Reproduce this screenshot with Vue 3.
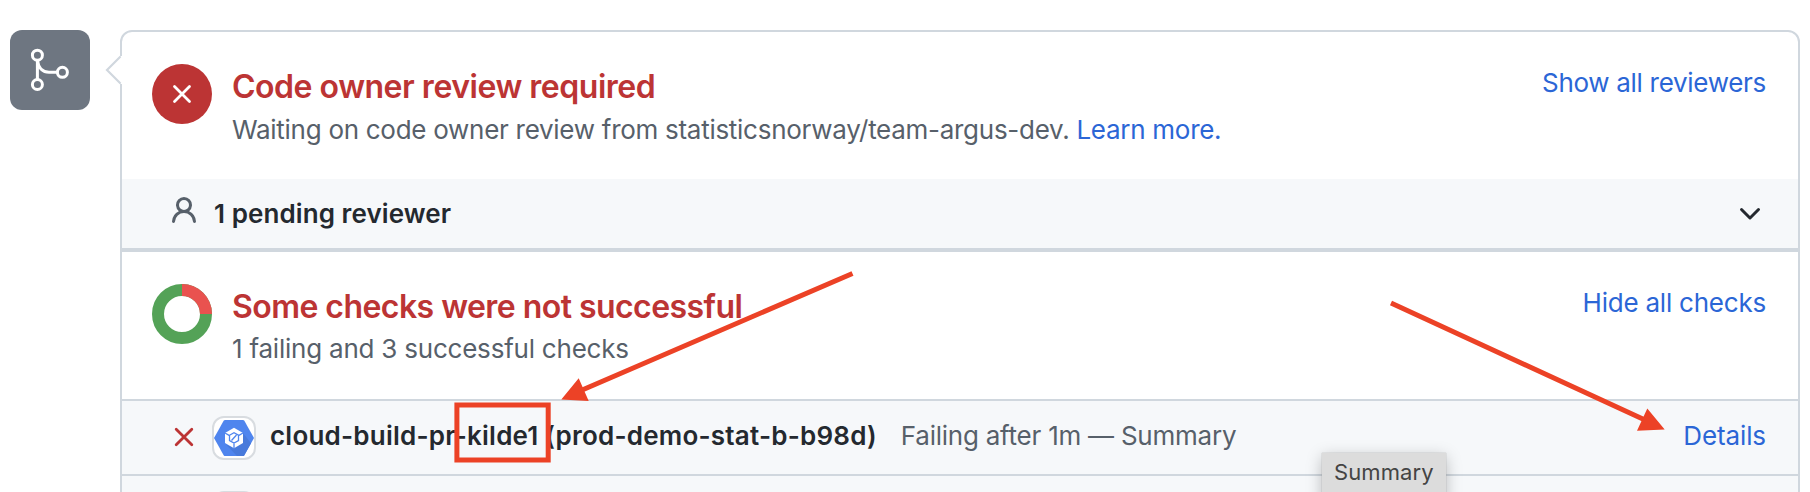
<script setup>
const failing = {
  name: 'cloud-build-pr-kilde1 (prod-demo-stat-b-b98d)',
  status: 'Failing after 1m — Summary',
}
</script>

<template>
  <main class="page">
    <div class="badge">
      <svg class="merge" width="48" height="48" viewBox="0 0 48 48" fill="none" stroke="#fff" stroke-width="3">
        <circle cx="11.4" cy="9.2" r="5" />
        <circle cx="11.4" cy="38.500" r="5" />
        <circle cx="36.4" cy="26.300" r="5" />
        <path d="M11.400 14v20M11.600 15c.8 6.800 5 11.300 11.400 11.300h8.500" />
      </svg>
    </div>

    <section class="panel">
      <svg class="caret" width="18" height="30" viewBox="0 0 18 30">
        <path d="M18 1L16 1 2 15l14 14h2z" fill="#fff" />
        <path d="M15.500 1.500L2 15l13.500 13.500" fill="none" stroke="#d0d7de" stroke-width="2.200" />
      </svg>

      <div class="summary">
        <div class="circle">
          <svg width="20" height="20" viewBox="0 0 20 20" fill="none" stroke="#fff" stroke-width="2.800" stroke-linecap="round">
            <path d="M2.500 2.500l15 15M17.500 2.500l-15 15" />
          </svg>
        </div>
        <div class="copy">
          <h3 class="review-title">Code owner review required</h3>
          <p class="waiting">Waiting on code owner review from statisticsnorway/team-argus-dev. <a>Learn more.</a></p>
        </div>
        <a class="action show">Show all reviewers</a>
      </div>

      <div class="pending">
        <svg class="person" width="32" height="32" viewBox="0 0 16 16" fill="#57606a">
          <path fill-rule="evenodd" d="M10.500 5a2.500 2.500 0 1 1-5 0 2.500 2.500 0 0 1 5 0zm.061 3.073a4 4 0 1 0-5.123 0 6.004 6.004 0 0 0-3.431 5.142.75.75 0 0 0 1.498.07 4.500 4.500 0 0 1 8.990 0 .75.75 0 1 0 1.498-.07 6.005 6.005 0 0 0-3.432-5.142z" />
        </svg>
        <strong>1 pending reviewer</strong>
        <svg class="chevron" width="32" height="32" viewBox="0 0 16 16" fill="#24292f">
          <path d="M12.780 6.220a.75.75 0 0 1 0 1.060l-4.250 4.250a.75.75 0 0 1-1.060 0L3.220 7.280a.75.75 0 0 1 1.060-1.060L8 9.940l3.720-3.720a.75.75 0 0 1 1.060 0z" />
        </svg>
      </div>

      <div class="summary">
        <svg class="donut" width="60" height="60" viewBox="0 0 60 60" fill="none" stroke-width="12">
          <circle cx="30" cy="30" r="24" stroke="#54a257" />
          <path d="M30 6a24 24 0 0 1 24 24" stroke="#e9524f" />
        </svg>
        <div class="copy">
          <h3 class="checks-title">Some checks were not successful</h3>
          <p class="count">1 failing and 3 successful checks</p>
        </div>
        <a class="action hide">Hide all checks</a>
      </div>

      <div class="check">
        <svg class="fail" width="20" height="20" viewBox="0 0 20 20" fill="none" stroke="#bc3434" stroke-width="2.800" stroke-linecap="round">
          <path d="M2.200 2.200l15.600 15.600M17.800 2.200L2.200 17.800" />
        </svg>
        <span class="app">
          <svg width="40" height="40" viewBox="0 0 40 40">
            <path d="M0 20L9.800 2.600Q10.300 2 11 2H29Q29.700 2 30.200 2.600L40 20 30.200 37.400Q29.700 38 29 38H11Q10.300 38 9.800 37.400z" fill="#4f85ee" />
            <path d="M29 15L37 25.300 30.200 37.400Q29.700 38 29 38H23L12 26.500 20 30z" fill="#487adb" />
            <path d="M20 9.800l9 5.100v10.200l-9 5.100-9-5.100V14.900z" fill="#fff" />
            <g fill="none" stroke="#4f85ee" stroke-width="1.300">
              <path d="M11 15l4.500 2.600M29 15l-4.500 2.600M20 25v5.500M15.500 17.200l4.500-2.500 4.500 2.500v5.300L20 25l-4.500-2.500zM17.500 22.500l5-5.500" />
            </g>
          </svg>
        </span>
        <strong>{{ failing.name }}</strong>
        <span class="status">{{ failing.status }}</span>
        <a class="details">Details</a>
      </div>

      <div class="check next"><span class="app"></span></div>
    </section>

    <div class="tooltip">Summary</div>

    <svg class="marks" width="1810" height="492" viewBox="0 0 1810 492" fill="none" stroke="#ec4226" stroke-width="5">
      <rect x="456.900" y="405" width="91.300" height="55" />
      <path d="M852.500 273.500L581 390.500M1391 303L1645 420" />
      <path d="M561.300 399.500l17.400-21.200 10 22.700zM1664.700 429.600l-17.400-21.200-10.300 22.400z" fill="#ec4226" stroke="none" />
    </svg>
  </main>
</template>

<style>
body {
  margin: 0;
  background: #fff;
}
</style>

<style scoped>
.page {
  position: relative;
  display: flex;
  align-items: flex-start;
  gap: 30px;
  box-sizing: border-box;
  width: 1810px;
  height: 492px;
  padding: 30px 10px 0;
  overflow: hidden;
  font: 26px/40px Inter, "Liberation Sans", sans-serif;
  color: #24292f;
}
h3, p {
  margin: 0;
}
a {
  color: #2b66d6;
}
strong {
  font-weight: 600;
}
svg {
  display: block;
  flex: none;
}
.badge {
  flex: none;
  display: flex;
  align-items: center;
  justify-content: center;
  width: 80px;
  height: 80px;
  border-radius: 12px;
  background: #6e7681;
}
.panel {
  position: relative;
  box-sizing: border-box;
  width: 1680px;
  height: 520px;
  border: 2px solid #d0d7de;
  border-radius: 12px;
}
.caret {
  position: absolute;
  left: -17px;
  top: 23px;
}
.summary {
  display: flex;
  align-items: flex-start;
  box-sizing: border-box;
  height: 147px;
  padding: 32px 32px 0 30px;
}
.circle {
  flex: none;
  display: flex;
  align-items: center;
  justify-content: center;
  width: 60px;
  height: 60px;
  border-radius: 50%;
  background: #bc3434;
}
.copy {
  margin: 3px 0 0 20px;
  white-space: nowrap;
}
h3 {
  font-size: 32px;
  font-weight: 600;
  line-height: 40px;
  color: #bc3434;
}
.review-title {
  letter-spacing: -0.48px;
}
.checks-title {
  letter-spacing: -0.55px;
}
p {
  color: #57606a;
}
.waiting {
  margin-top: 3px;
  letter-spacing: -0.28px;
}
.count {
  margin-top: 2px;
  letter-spacing: -0.22px;
}
.action, .details {
  margin-left: auto;
  white-space: nowrap;
}
.action {
  margin-top: -1px;
}
.show {
  letter-spacing: -0.3px;
}
.hide {
  letter-spacing: -0.22px;
}
.pending {
  display: flex;
  align-items: flex-start;
  box-sizing: border-box;
  height: 73px;
  padding: 15px 32px 0 46px;
  border-bottom: 4px solid #d0d7de;
  background: #f6f8fa;
}
.person {
  margin: 1px 14px 0 0;
}
.pending strong {
  letter-spacing: 0.08px;
}
.chevron {
  margin: 2px 0 0 auto;
}
.check {
  display: flex;
  align-items: flex-start;
  box-sizing: border-box;
  height: 75px;
  padding: 15px 32px 0 52px;
  border-top: 2px solid #d0d7de;
  background: #f6f8fa;
  white-space: nowrap;
}
.fail {
  margin: 11px 18px 0 0;
}
.app {
  flex: none;
  box-sizing: border-box;
  width: 44px;
  height: 44px;
  border: 2px solid #d8dce0;
  border-radius: 12px;
  background: #fff;
}
.check strong {
  margin-left: 14px;
  letter-spacing: 0.22px;
}
.status {
  margin-left: 24px;
  letter-spacing: -0.24px;
  color: #57606a;
}
.details {
  letter-spacing: -0.1px;
}
.next {
  padding-left: 90px;
}
.tooltip {
  position: absolute;
  left: 1322px;
  top: 453px;
  box-sizing: border-box;
  width: 124px;
  height: 50px;
  padding-left: 12px;
  font-size: 22px;
  line-height: 38px;
  letter-spacing: 0.1px;
  color: #444;
  background: #dcdcdc;
  box-shadow: 0 0 1px #999, 0 4px 16px rgba(0, 0, 0, 0.25);
}
.marks {
  position: absolute;
  inset: 0;
}
</style>
